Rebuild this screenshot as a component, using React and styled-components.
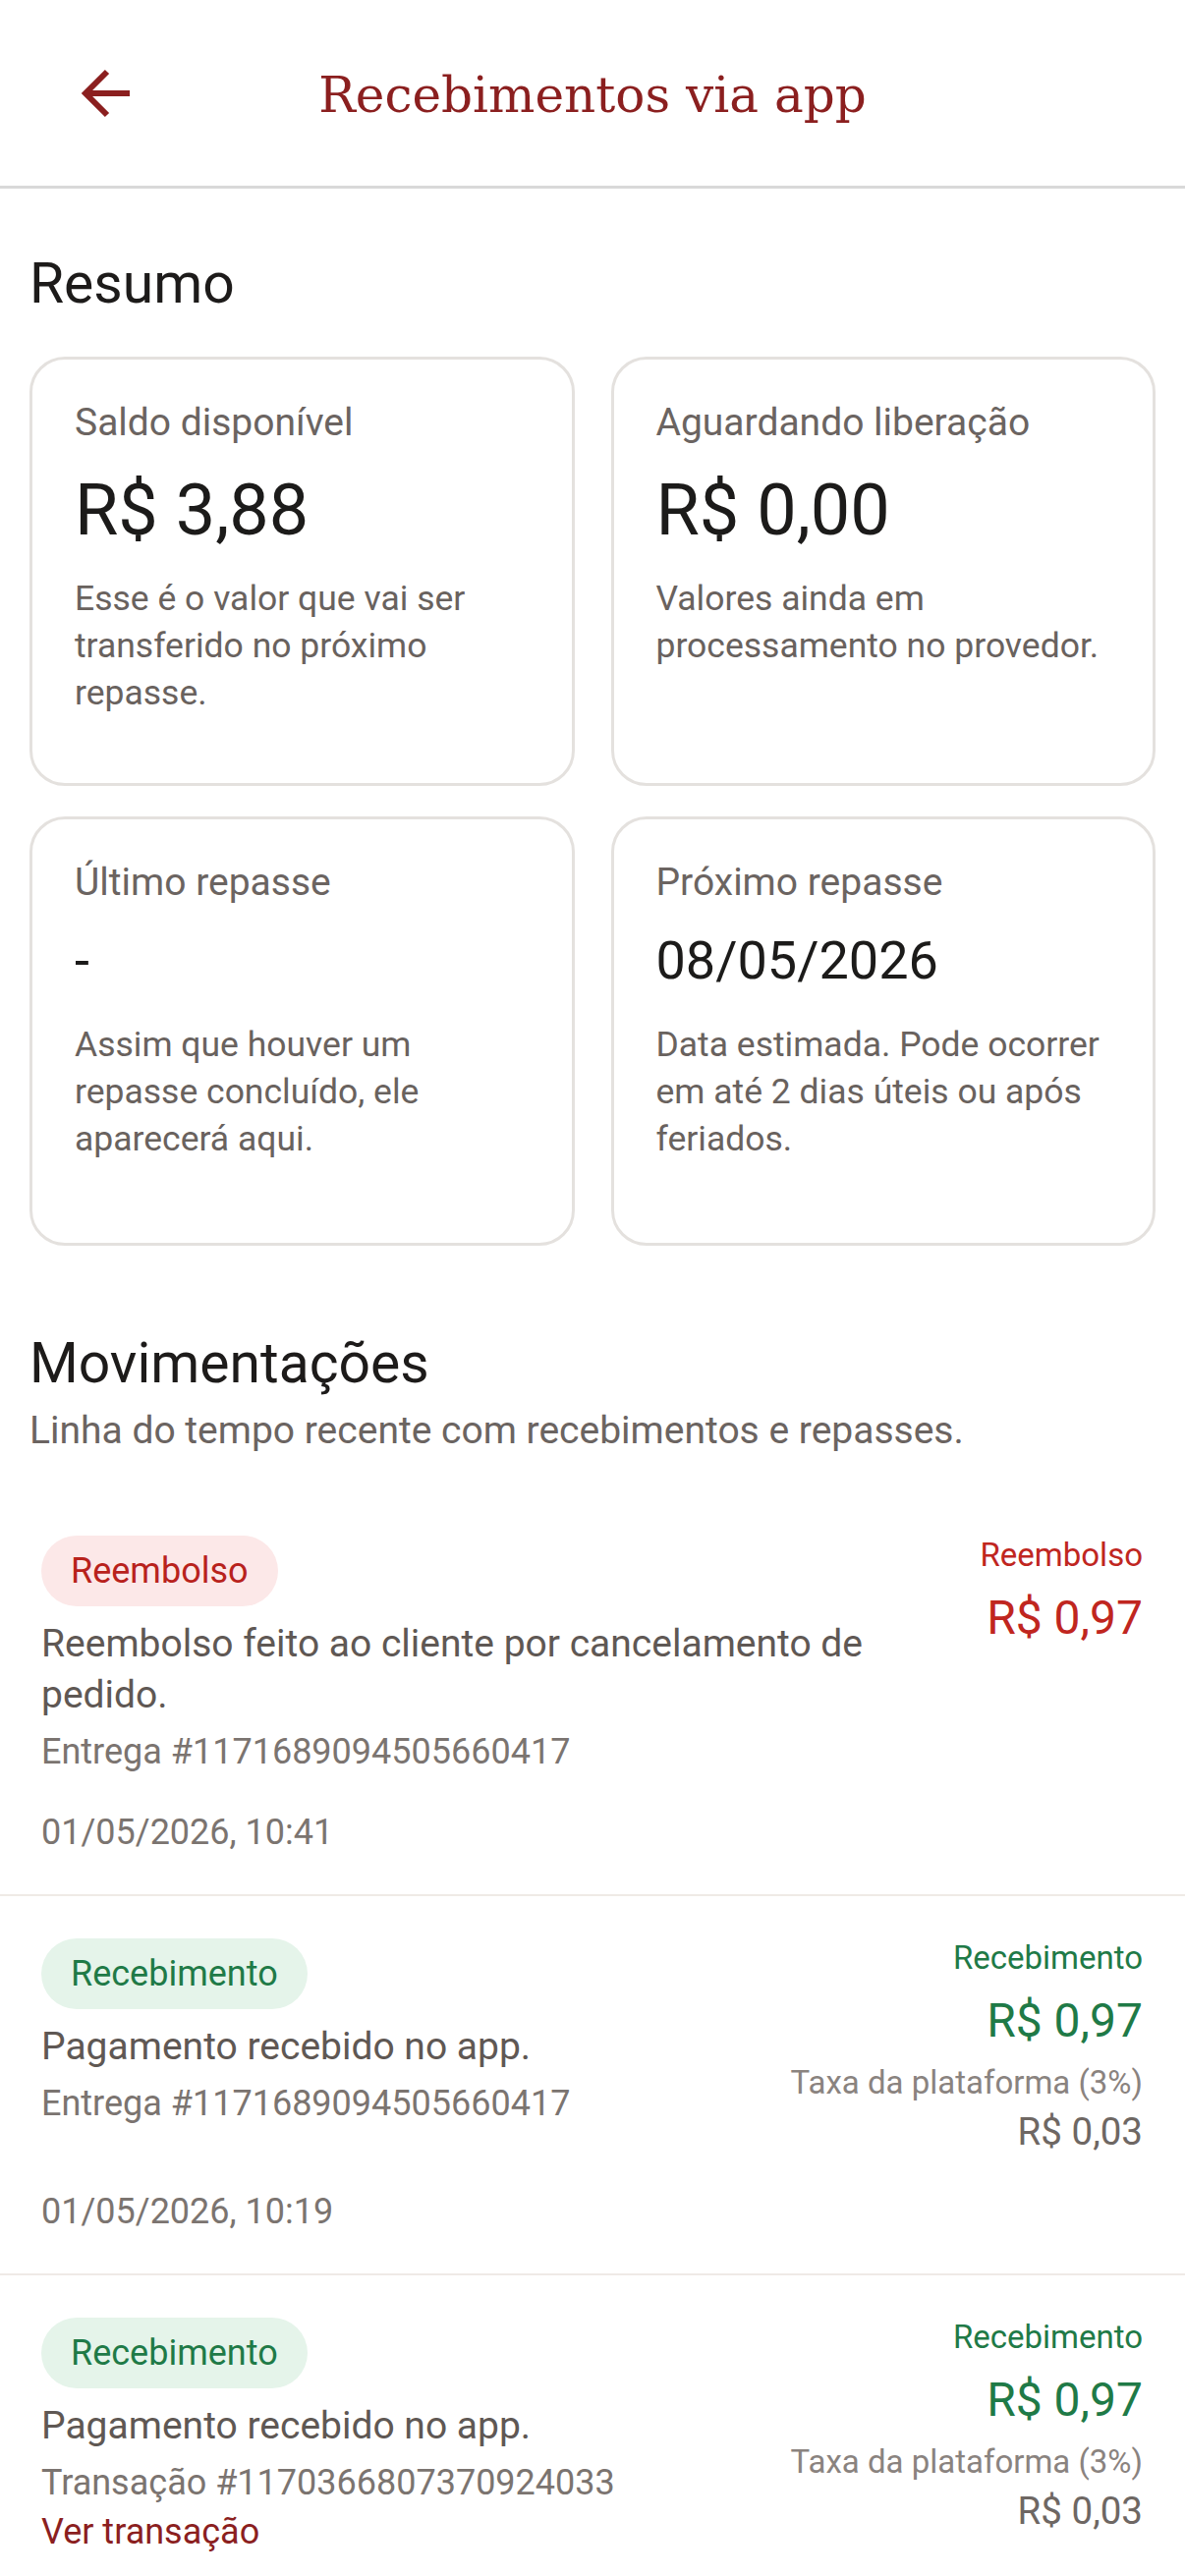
import React from "react";
import styled, { createGlobalStyle } from "styled-components";

const GlobalStyle = createGlobalStyle`
  html, body {
    margin: 0;
    padding: 0;
    background: #ffffff;
  }
  body {
    font-family: Roboto, "Noto Sans", "Liberation Sans", sans-serif;
    color: #1d1b1a;
  }
  * { box-sizing: border-box; }
`;

const tones = {
  red: { fg: "#c0261f", badgeFg: "#b8221c", badgeBg: "#fce8e8" },
  green: { fg: "#1f7a47", badgeFg: "#1f7a47", badgeBg: "#e5f4ea" },
};

const Header = styled.header`
  display: grid;
  grid-template-columns: 1fr auto 1fr;
  align-items: center;
  height: 192px;
  border-bottom: 3px solid #d9d9d9;
  padding-left: 80px;
`;

const BackButton = styled.button`
  justify-self: start;
  display: flex;
  align-items: center;
  justify-content: center;
  width: 56px;
  height: 52px;
  padding: 0;
  border: 0;
  background: transparent;
  cursor: pointer;
`;

const Title = styled.h1`
  margin: 0;
  padding-top: 4px;
  margin-left: -80px;
  font-family: "DejaVu Serif", "Liberation Serif", serif;
  font-weight: 400;
  font-size: 50px;
  color: #8b1f1f;
  white-space: nowrap;
`;

const Main = styled.main`
  padding: 64px 30px 0;
`;

const SectionTitle = styled.h2`
  margin: ${(p) => p.$top || 0}px 0 0;
  font-size: 57px;
  line-height: 66px;
  font-weight: 400;
  color: #1d1b1a;
`;

const Subtitle = styled.p`
  margin: 11px 0 0;
  font-size: 39px;
  line-height: 48px;
  color: #6b6461;
`;

const CardGrid = styled.div`
  display: grid;
  grid-template-columns: 1fr 1fr;
  column-gap: 37px;
  row-gap: 31px;
  margin-top: 41px;
`;

const Card = styled.section`
  display: flex;
  flex-direction: column;
  min-height: 437px;
  padding: 40px 36px 40px 43px;
  border: 3px solid #e4e1de;
  border-radius: 36px;
  background: #ffffff;
`;

const CardLabel = styled.div`
  font-size: 39px;
  line-height: 48px;
  color: #6b6461;
`;

const CardValue = styled.div`
  margin-top: 24px;
  margin-bottom: ${(p) => Math.round((72 - p.$size) * 0.4)}px;
  font-size: ${(p) => p.$size}px;
  line-height: 1.17;
  color: #1c1b1a;
`;

const CardText = styled.p`
  margin: 23px 0 0;
  font-size: 35.5px;
  line-height: 48px;
  color: #69625e;
`;

const List = styled.ul`
  list-style: none;
  margin: 40px -30px 0;
  padding: 0;
`;

const Item = styled.li`
  padding: 43px 43px 39px 42px;
  border-bottom: 2px solid #efeae6;
`;

const ItemRow = styled.div`
  display: flex;
  align-items: flex-start;
  justify-content: space-between;
  gap: 48px;
`;

const ItemMain = styled.div`
  flex: 1;
  min-width: 0;
  display: flex;
  flex-direction: column;
  align-items: flex-start;
`;

const Badge = styled.span`
  display: inline-flex;
  align-items: center;
  height: 72px;
  padding: 0 30px;
  border-radius: 36px;
  font-size: 36px;
  color: ${(p) => tones[p.$tone].badgeFg};
  background: ${(p) => tones[p.$tone].badgeBg};
`;

const ItemDesc = styled.p`
  margin: 12px 0 0;
  font-size: 39px;
  line-height: 52px;
  color: #5f5854;
`;

const ItemRef = styled.div`
  margin-top: 8px;
  font-size: 36px;
  line-height: 48px;
  color: #7b7470;
`;

const ItemLink = styled.a`
  margin-top: 2px;
  font-size: 36px;
  line-height: 48px;
  color: #8b1f1f;
  text-decoration: none;
`;

const ItemSide = styled.div`
  flex-shrink: 0;
  display: flex;
  flex-direction: column;
  align-items: flex-end;
  text-align: right;
`;

const KindLabel = styled.div`
  font-size: 33px;
  line-height: 40px;
  color: ${(p) => tones[p.$tone].fg};
`;

const Amount = styled.div`
  margin-top: 16px;
  font-size: 48px;
  line-height: 56px;
  color: ${(p) => tones[p.$tone].fg};
`;

const FeeLabel = styled.div`
  margin-top: 14px;
  font-size: 33px;
  line-height: 42px;
  color: #8a837f;
`;

const FeeValue = styled.div`
  margin-top: 6px;
  font-size: 38.5px;
  line-height: 46px;
  color: #6e6763;
`;

const ItemDate = styled.div`
  margin-top: 34px;
  font-size: 36px;
  line-height: 48px;
  color: #7b7470;
`;

const BackArrow = () => (
  <svg width="56" height="52" viewBox="0 0 56 52" fill="none">
    <path d="M6 26 H52" stroke="#8b1f1f" strokeWidth="6" />
    <path
      d="M29 4 L7 26 L29 48"
      stroke="#8b1f1f"
      strokeWidth="6"
      strokeLinejoin="miter"
      fill="none"
    />
  </svg>
);

const cards = [
  {
    label: "Saldo disponível",
    value: "R$ 3,88",
    size: 72,
    text: "Esse é o valor que vai ser transferido no próximo repasse.",
  },
  {
    label: "Aguardando liberação",
    value: "R$ 0,00",
    size: 72,
    text: "Valores ainda em processamento no provedor.",
  },
  {
    label: "Último repasse",
    value: "-",
    size: 54,
    text: "Assim que houver um repasse concluído, ele aparecerá aqui.",
  },
  {
    label: "Próximo repasse",
    value: "08/05/2026",
    size: 54,
    text: "Data estimada. Pode ocorrer em até 2 dias úteis ou após feriados.",
  },
];

const movements = [
  {
    tone: "red",
    kind: "Reembolso",
    desc: "Reembolso feito ao cliente por cancelamento de pedido.",
    ref: "Entrega #1171689094505660417",
    amount: "R$ 0,97",
    date: "01/05/2026, 10:41",
  },
  {
    tone: "green",
    kind: "Recebimento",
    desc: "Pagamento recebido no app.",
    ref: "Entrega #1171689094505660417",
    amount: "R$ 0,97",
    fee: "R$ 0,03",
    date: "01/05/2026, 10:19",
  },
  {
    tone: "green",
    kind: "Recebimento",
    desc: "Pagamento recebido no app.",
    ref: "Transação #1170366807370924033",
    link: "Ver transação",
    amount: "R$ 0,97",
    fee: "R$ 0,03",
  },
];

export default function App() {
  return (
    <>
      <GlobalStyle />
      <Header>
        <BackButton aria-label="Voltar">
          <BackArrow />
        </BackButton>
        <Title>Recebimentos via app</Title>
        <span />
      </Header>
      <Main>
        <SectionTitle>Resumo</SectionTitle>
        <CardGrid>
          {cards.map((c) => (
            <Card key={c.label}>
              <CardLabel>{c.label}</CardLabel>
              <CardValue $size={c.size}>{c.value}</CardValue>
              <CardText>{c.text}</CardText>
            </Card>
          ))}
        </CardGrid>

        <SectionTitle $top={87}>Movimentações</SectionTitle>
        <Subtitle>Linha do tempo recente com recebimentos e repasses.</Subtitle>

        <List>
          {movements.map((m, i) => (
            <Item key={i}>
              <ItemRow>
                <ItemMain>
                  <Badge $tone={m.tone}>{m.kind}</Badge>
                  <ItemDesc>{m.desc}</ItemDesc>
                  <ItemRef>{m.ref}</ItemRef>
                  {m.link && <ItemLink href="#">{m.link}</ItemLink>}
                </ItemMain>
                <ItemSide>
                  <KindLabel $tone={m.tone}>{m.kind}</KindLabel>
                  <Amount $tone={m.tone}>{m.amount}</Amount>
                  {m.fee && (
                    <>
                      <FeeLabel>Taxa da plataforma (3%)</FeeLabel>
                      <FeeValue>{m.fee}</FeeValue>
                    </>
                  )}
                </ItemSide>
              </ItemRow>
              {m.date && <ItemDate>{m.date}</ItemDate>}
            </Item>
          ))}
        </List>
      </Main>
    </>
  );
}
